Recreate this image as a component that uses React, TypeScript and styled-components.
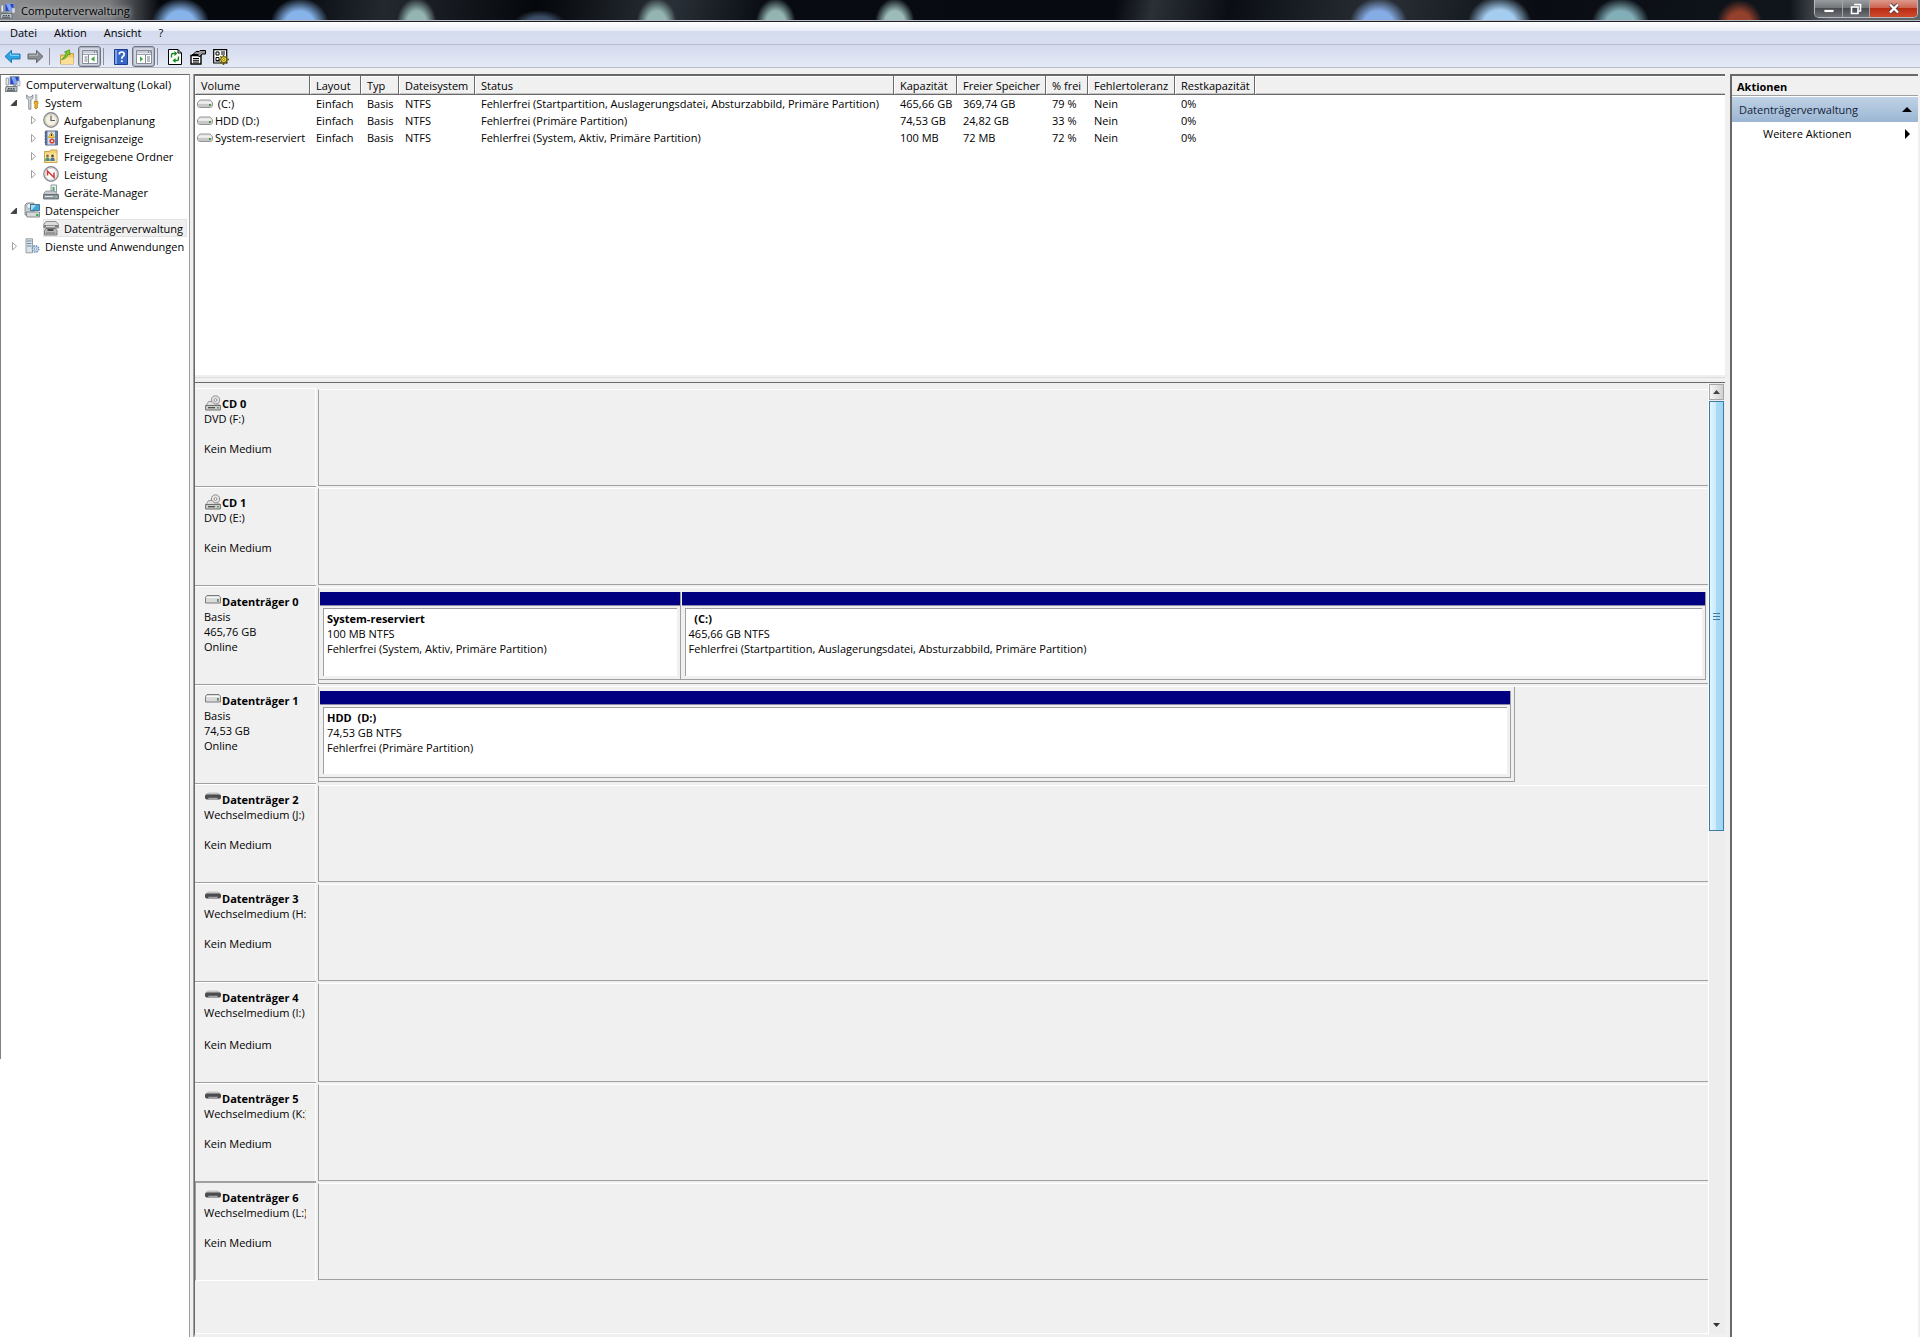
import React from 'react';
import styled, { createGlobalStyle, css } from 'styled-components';

const GlobalStyle = createGlobalStyle`
  * { box-sizing: border-box; }
  html, body { margin: 0; padding: 0; }
  body { background: #fff; overflow: hidden; }
  body, button, table { font-family: "Open Sans", "Noto Sans", sans-serif; font-size: 11px; line-height: 15px; color: #000; }
  button { margin: 0; padding: 0; border: 0; background: none; text-align: left; }
  svg { display: block; flex: none; }
  ul { list-style: none; margin: 0; padding: 0; }
  h1, h2, p { margin: 0; font-size: inherit; font-weight: inherit; }
`;

const c = { face: '#f0f0f0', gray: '#a0a0a0', dark: '#696969', navy: '#000080' };

/* ---------- window frame ---------- */

const Window = styled.div`
  height: 100vh;
  display: flex;
  flex-direction: column;
  background: ${c.face};
`;

const blob = (x: string, color: string, w = 22, h = 26) =>
  `radial-gradient(ellipse ${w}px ${h}px at ${x} 24px, ${color} 0%, ${color} 50%, transparent 100%)`;

const TitleBar = styled.header`
  flex: none;
  height: 22px;
  display: flex;
  align-items: flex-start;
  justify-content: space-between;
  border-bottom: 1px solid #1c2026;
  box-shadow: inset 0 -1px 0 #b9bec4;
  background:
    linear-gradient(90deg, #8d8f91 0, #77797b 110px, rgba(90, 94, 98, 0) 160px),
    linear-gradient(90deg, transparent calc(100% - 130px), #5f6468 calc(100% - 90px)),
    ${[
      blob('9.4%', '#86b3ea', 29),
      blob('15.6%', '#86b3ea', 29),
      blob('21.7%', '#93b4b0', 20),
      blob('28.1%', '#3d4e68', 26, 14),
      blob('34.2%', '#93b4b0', 20),
      blob('40.4%', '#93b4b0', 20),
      blob('46.6%', '#9bbcba', 20),
      blob('71.8%', '#86ace6', 29),
      blob('78.1%', '#a4cdf0', 32, 28),
      blob('84.4%', '#82aeb8', 29),
      blob('90.6%', '#93402c', 23, 24),
    ].join(',')},
    linear-gradient(100deg, #05090e 15%, #23282f 20%, #04070b 28%, #2a3037 35%, #080c12 40%, #070a10 58%, #2b3036 60%, #0a0e14 64%, #2a2f36 72%, #090d13 80%, #10151b 92%);
`;

const Caption = styled.h1`
  display: flex;
  align-items: center;
  gap: 5px;
  height: 21px;
  text-shadow: 0 0 5px #c9cbcd, 0 0 8px #c9cbcd;
`;

const CaptionButtons = styled.div`
  display: flex;
  height: 18px;
  margin-right: 2px;
  border: 1px solid #b5b9bd;
  border-top: 0;
  border-radius: 0 0 5px 5px;
  overflow: hidden;
`;

const CaptionButton = styled.button<{ $w: number; $close?: boolean }>`
  width: ${p => p.$w}px;
  display: flex;
  align-items: center;
  justify-content: center;
  border-right: ${p => (p.$close ? 0 : '1px solid #a2a6aa')};
  background: ${p =>
    p.$close
      ? 'linear-gradient(#dd9a8c 0, #cf6552 45%, #b92c14 50%, #cf4a2c 100%)'
      : 'linear-gradient(#9a9da0 0, #74777a 45%, #484b4f 50%, #6f7377 100%)'};
`;

const MenuBar = styled.nav`
  flex: none;
  height: 23px;
  display: flex;
  align-items: center;
  gap: 17px;
  padding: 0 0 1px 10px;
  border-bottom: 1px solid #b6bccc;
  background: linear-gradient(#fff 0, #e9edf7 9px, #d4dbee 9px, #d9dff0 100%);
`;

const MenuItem = styled.button``;

const ToolBar = styled.div`
  flex: none;
  height: 23px;
  display: flex;
  align-items: center;
  padding: 1px 0 0 1px;
  border-bottom: 1px solid #b6bccc;
  background: linear-gradient(#d4dbee, #e4e9f5);
`;

const ToolButton = styled.button<{ $on?: boolean }>`
  width: 23px;
  height: 21px;
  display: flex;
  align-items: center;
  justify-content: center;
  border-radius: 3px;
  ${p => p.$on && css`
    border: 1px solid #6f7480;
    background: #d3d7e2;
    box-shadow: inset 0 0 1px 1px #a9aebb;
  `}
`;

const ToolSeparator = styled.span`
  width: 8px;
  height: 17px;
  background: linear-gradient(#8b909c, #8b909c) 2px 0 / 1px 100% no-repeat;
`;

/* ---------- panes ---------- */

const Panes = styled.div`
  flex: 1;
  min-height: 0;
  display: grid;
  grid-template-columns: 190px minmax(0, 1fr) 190px;
  padding-top: 6px;
`;

const TreePane = styled.aside`
  overflow: hidden;
  border-top: 1px solid ${c.dark};
  border-right: 1px solid ${c.gray};
  background: linear-gradient(#828282, #828282) 0 0 / 1px 78% no-repeat #fff;
`;

const TreeRow = styled.li<{ $level: number }>`
  height: 18px;
  display: flex;
  align-items: center;
  padding-left: ${p => [5, 6, 25][p.$level]}px;
  white-space: nowrap;
`;

const Twisty = styled.span<{ $hidden?: boolean }>`
  width: 18px;
  padding-left: 4px;
  visibility: ${p => (p.$hidden ? 'hidden' : 'visible')};
`;

const TreeLabel = styled.button<{ $selected?: boolean }>`
  height: 18px;
  display: flex;
  align-items: center;
  gap: 5px;
  padding-right: 4px;
  ${p => p.$selected && css`
    background: #f0f0f0;
    box-shadow: inset 0 0 0 1px #e2e2e2;
  `}
`;

const MainPane = styled.main`
  min-width: 0;
  display: grid;
  grid-template-rows: 309px minmax(0, 1fr);
  margin: 0 5px 0 3px;
  border-left: 1px solid ${c.gray};
`;

const VolumePane = styled.section`
  display: flex;
  flex-direction: column;
  border-left: 1px solid ${c.dark};
  border-top: 2px solid ${c.dark};
  border-bottom: 1px solid ${c.dark};
  overflow: hidden;
`;

const VolumeArea = styled.div`
  flex: 1;
  background: #fff;
`;

const Splitter = styled.div`
  height: 7px;
  background: linear-gradient(transparent 2px, #dcdcdc 2px, #dcdcdc 3px, transparent 3px);
`;

const VolumeTable = styled.table`
  width: 100%;
  table-layout: fixed;
  border-collapse: separate;
  border-spacing: 0;
`;

const Th = styled.th<{ $filler?: boolean }>`
  height: 19px;
  padding: 1px 0 0 6px;
  overflow: hidden;
  font-weight: normal;
  text-align: left;
  white-space: nowrap;
  background: ${c.face};
  border-bottom: 1px solid ${c.dark};
  border-right: ${p => (p.$filler ? 0 : `1px solid ${c.dark}`)};
  box-shadow: inset 1px 1px 0 #fff, inset 0 -1px 0 #c4c4c4;
`;

const Td = styled.td`
  height: 17px;
  padding: 0 0 0 6px;
  white-space: nowrap;
  &:first-child { padding-left: 2px; }
`;

const VolumeName = styled.span`
  display: flex;
  align-items: center;
  gap: 2px;
  white-space: pre;
`;

/* ---------- graphical disk view ---------- */

const DiskPane = styled.section`
  display: flex;
  min-height: 0;
  border-left: 1px solid ${c.dark};
  border-bottom: 3px solid ${c.face};
  box-shadow: inset 0 -1px 0 #fff;
  overflow: hidden;
`;

const DiskList = styled.div`
  flex: 1;
  min-width: 0;
  padding-top: 5px;
  border-right: 1px solid #fff;
`;

const DiskRow = styled.article<{ $tall?: boolean }>`
  height: ${p => (p.$tall ? 101 : 99)}px;
  display: flex;
`;

const DiskInfo = styled.div<{ $selected?: boolean }>`
  width: 121px;
  flex: none;
  padding: 7px 0 0 9px;
  border-top: 1px solid #fff;
  border-bottom: 1px solid ${c.gray};
  box-shadow: inset -1px 0 0 #fff;
  ${p => p.$selected && css`
    padding-left: 8px;
    border-top: 1px solid ${c.gray};
    border-left: 1px solid ${c.gray};
    border-bottom: 1px solid #fff;
  `}
`;

const DiskTitle = styled.h2`
  height: 15px;
  display: flex;
  align-items: flex-end;
  gap: 1px;
  font-weight: bold;
  white-space: nowrap;
  svg { align-self: center; margin-left: 1px; }
`;

const DiskLine = styled.p<{ $gap?: boolean }>`
  width: 102px;
  min-height: ${p => (p.$gap ? 17 : 15)}px;
  overflow: hidden;
  white-space: nowrap;
`;

const DiskBody = styled.div<{ $bare?: boolean }>`
  flex: 1;
  min-width: 0;
  display: flex;
  margin: 1px 0 1px 2px;
  padding-right: 2px;
  border-top: 1px solid #fff;
  border-left: 1px solid ${c.gray};
  border-bottom: 1px solid ${p => (p.$bare ? 'transparent' : c.gray)};
`;

const DiskExtent = styled.div<{ $share: number; $framed?: boolean }>`
  flex: 0 0 ${p => p.$share}%;
  display: flex;
  padding: 4px ${p => (p.$framed ? 3 : 0)}px 3px 0;
  border-right: ${p => (p.$framed ? `1px solid ${c.gray}` : 0)};
  border-bottom: ${p => (p.$framed ? `1px solid ${c.gray}` : 0)};
`;

const PartitionBox = styled.div<{ $share: number }>`
  flex: ${p => p.$share} 1 0;
  min-width: 0;
  display: flex;
  flex-direction: column;
  padding-left: 1px;
  border-right: 1px solid ${c.gray};
  border-bottom: 1px solid ${c.gray};
`;

const PartitionBar = styled.div`
  flex: none;
  height: 14px;
  background: ${c.navy};
  border-bottom: 1px solid #8c8ca8;
`;

const PartitionInfo = styled.div`
  flex: 1;
  margin: 2px 3px 3px;
  padding: 2px 0 0 3px;
  border-top: 1px solid ${c.gray};
  border-left: 1px solid ${c.gray};
  background: #fff;
  white-space: pre;
  overflow: hidden;
`;

const Bold = styled.p`
  font-weight: bold;
`;

const ScrollBar = styled.div`
  width: 16px;
  flex: none;
  display: flex;
  flex-direction: column;
  padding: 1px 1px 1px 0;
  background: #ededed;
`;

const ScrollArrow = styled.button<{ $raised?: boolean }>`
  height: 17px;
  flex: none;
  display: flex;
  align-items: center;
  justify-content: center;
  ${p => p.$raised && css`
    height: 16px;
    border: 1px solid #a6a6a6;
    background: linear-gradient(90deg, #f7f7f7, #cfcfcf);
  `}
`;

const ScrollTrack = styled.div`
  flex: 1;
  padding-top: 1px;
`;

const ScrollThumb = styled.div`
  height: 47%;
  display: flex;
  align-items: center;
  justify-content: center;
  border: 1px solid #3d7ba3;
  background: linear-gradient(90deg, #e4f5fd 0, #c9ebfc 45%, #a6daf5 50%, #a3d6f2 100%);
`;

/* ---------- actions ---------- */

const ActionPane = styled.aside`
  display: flex;
  flex-direction: column;
  margin-right: 2px;
  border-left: 2px solid ${c.dark};
  border-top: 2px solid ${c.dark};
  background: #fff;
`;

const ActionHeader = styled.h2`
  height: 20px;
  padding: 3px 0 0 5px;
  background: ${c.face};
  border-bottom: 1px solid ${c.gray};
  font-weight: bold;
`;

const ActionGroup = styled.button`
  height: 25px;
  margin-top: 1px;
  display: flex;
  align-items: center;
  justify-content: space-between;
  padding: 0 6px 0 7px;
  color: #14233c;
  background: linear-gradient(#c0d2e6, #9bb6d3);
`;

const ActionItem = styled.button`
  height: 23px;
  display: flex;
  align-items: center;
  justify-content: space-between;
  padding: 0 8px 0 31px;
`;

/* ---------- icons ---------- */

const ComputerIcon = () => (
  <svg width="16" height="16" viewBox="0 0 16 16">
    <path d="M5 0.5h9v8H5z" fill="#2448c8" stroke="#8d98a8" />
    <path d="M6 1h4l3 7H9z" fill="#7fa4f2" />
    <path d="M8 9h3v2H8z" fill="#a0a6ae" />
    <path d="M1 2h2.500v7H1z" fill="#e4e8ee" stroke="#7f8894" strokeWidth=".7" />
    <path d="M12 5h3v5h-3z" fill="#d8dee6" stroke="#8d98a8" strokeWidth=".6" />
    <path d="M1 10.500h11v5H0z" fill="#b8c0c4" stroke="#5c666c" strokeWidth=".8" />
    <path d="M3 12.500h1.500m1 0H7m1 0h1.500M2 14.200h8" stroke="#38434a" />
  </svg>
);
const ToolsIcon = () => (
  <svg width="16" height="16" viewBox="-2 0 16 16">
    <path d="M.7 .8v3.600l2 1.300v9.500h2.200V5.700l2-1.300V.8L5.200 3H2.400z" fill="#d5d8dc" stroke="#777d84" strokeWidth=".8" />
    <path d="M9.300 .8h1.600v6.500H9.300z" fill="#dfe2e6" stroke="#888" strokeWidth=".6" />
    <path d="M8.300 7.500h3.600v2.500l-.6.600V14q-1.200 1.800-2.400 0v-3.400l-.6-.6z" fill="#f1b51c" stroke="#a86f08" strokeWidth=".7" />
  </svg>
);
const ClockIcon = () => (
  <svg width="16" height="16" viewBox="0 0 16 16">
    <circle cx="8" cy="8" r="7.200" fill="#f4f0e4" stroke="#8a8f95" strokeWidth="1.400" />
    <circle cx="8" cy="8" r="5.700" fill="none" stroke="#d9cfb4" />
    <path d="M8 3.500V8.500h4" fill="none" stroke="#5a5f68" strokeWidth="1.200" />
  </svg>
);
const EventIcon = () => (
  <svg width="16" height="16" viewBox="0 0 16 16">
    <path d="M2.500 1h12v14h-12z" fill="#5b7bb5" stroke="#5f6a80" />
    <path d="M4.500 1.500h7.500v13H4.500z" fill="#d3def1" />
    <path d="M8.500 2l3 5.500H5.500z" fill="#ffd42a" stroke="#b58b00" strokeWidth=".6" />
    <path d="M8.500 4v2" stroke="#222" />
    <circle cx="9" cy="11" r="2.600" fill="#d93a2b" />
    <path d="M7.900 9.900l2.200 2.200m0-2.200l-2.200 2.200" stroke="#fff" strokeWidth=".8" />
    <path d="M1.500 3h2M1.500 6h2M1.500 9h2M1.500 12h2" stroke="#555" />
  </svg>
);
const SharedFolderIcon = () => (
  <svg width="16" height="16" viewBox="0 0 16 16">
    <path d="M1.500 3.500h5l1-1.500h6.500v12.500H1.500z" fill="#f3d377" stroke="#c9a24a" />
    <path d="M2 5.500h11.500V14H2z" fill="#f9e6a0" />
    <circle cx="4.500" cy="8" r="1.400" fill="#8a6a48" /><path d="M2.200 13q0-3.400 2.300-3.400T6.800 13z" fill="#4d8f7a" />
    <circle cx="9.500" cy="8" r="1.400" fill="#5f4a36" /><path d="M7.200 13q0-3.400 2.300-3.400t2.300 3.400z" fill="#4d76a8" />
  </svg>
);
const PerfIcon = () => (
  <svg width="16" height="16" viewBox="0 0 16 16">
    <circle cx="8" cy="8" r="7.200" fill="#fff" stroke="#8a8f95" strokeWidth="1.400" />
    <circle cx="8" cy="8" r="5.700" fill="none" stroke="#d5d7da" />
    <path d="M4.500 9.500V5l6.500 6.500V6.500" fill="none" stroke="#d03a32" strokeWidth="1.500" />
  </svg>
);
const DeviceIcon = () => (
  <svg width="16" height="16" viewBox="0 0 16 16">
    <path d="M8 1h5.500v7H8z" fill="#e8f3ea" stroke="#90989e" />
    <path d="M9.500 3h2v4h-2z" fill="#52a86a" />
    <path d="M3 7h8l3 2v2H1V9z" fill="#c5cace" stroke="#7b8288" strokeWidth=".7" />
    <path d="M.5 10.500h15v4.500H.5z" fill="#8e979d" stroke="#5b636a" strokeWidth=".8" />
    <path d="M2 12.500h8" stroke="#dfe4e8" /><path d="M12 12h2v1.500h-2z" fill="#74d672" />
  </svg>
);
const StorageIcon = () => (
  <svg width="16" height="16" viewBox="0 0 16 16">
    <path d="M1 3l2-2h7v12H1z" fill="#c9ced2" stroke="#7a8187" strokeWidth=".8" />
    <circle cx="5" cy="4" r="2.500" fill="#eef2f4" stroke="#8d949a" strokeWidth=".7" />
    <path d="M6.500 2.500h9v6h-9z" fill="#3fa7dc" stroke="#31627e" strokeWidth=".8" />
    <path d="M7 3h5L8 8H7z" fill="#a4ddf5" />
    <path d="M2 10h13.500v5H3z" fill="#d6dadd" stroke="#6c7379" strokeWidth=".8" />
    <path d="M12 12h2.500v2H12z" fill="#3fae4a" />
  </svg>
);
const DiskMgmtIcon = () => (
  <svg width="16" height="16" viewBox="0 0 16 16">
    <path d="M3 1.500h10l2.500 3V8H.8V4.500z" fill="#dcdcdc" stroke="#777" strokeWidth=".8" />
    <path d="M1 5h14v2.500H1z" fill="#7d7d7d" /><path d="M3 8.500h9.500l1.500 2v4.500H1.500V10.500z" fill="#b9b9b9" stroke="#666" strokeWidth=".8" />
    <path d="M3 6.300h9" stroke="#eee" /><path d="M4.500 10h6" stroke="#222" strokeWidth="1.400" /><path d="M3 13h9" stroke="#777" />
  </svg>
);
const ServicesIcon = () => (
  <svg width="16" height="16" viewBox="0 0 16 16">
    <path d="M2 .8h6.500v14H2z" fill="#dbe3e8" stroke="#7e8a93" strokeWidth=".8" />
    <path d="M3 3h4.500M3 5.500h4.500M3 8h4.500" stroke="#6f8796" />
    <circle cx="11.500" cy="11" r="3.200" fill="#cfe0ef" stroke="#6f92b5" strokeWidth="1.600" strokeDasharray="1.500 1" />
    <circle cx="11.500" cy="11" r="1.200" fill="#fff" stroke="#6f92b5" strokeWidth=".7" />
  </svg>
);
const VolumeIcon = () => (
  <svg width="16" height="10" viewBox="0 0 16 10">
    <path d="M3 1h10q1.500 1 2.500 3v2.500q-.5 2-2 2h-11q-1.500 0-2-2V4Q1.500 2 3 1z" fill="#e6e6e6" stroke="#8a8a8a" strokeWidth=".9" />
    <path d="M1 4.500h14v2q-.3 1.500-1.500 1.500h-11Q1.300 8 1 6.500z" fill="#c6c7c7" /><path d="M1.500 4h13" stroke="#fafafa" />
    <path d="M12 5h1.800v2H12z" fill="#3f8f4a" />
  </svg>
);
const DiskIcon = () => (
  <svg width="16" height="15" viewBox="0 0 16 15">
    <path d="M2 1.500h12l1.500 2v5.500H.5V3.500z" fill="#d9dad9" stroke="#7b7b7b" />
    <path d="M1.500 3.500h13" stroke="#fafafa" /><path d="M12 5h1.800v2.800H12z" fill="#58935f" />
  </svg>
);
const RemovableIcon = () => (
  <svg width="16" height="15" viewBox="0 0 16 15">
    <path d="M3.500 .5h9Q15 1 16 3.500H0Q1 1 3.500 .5z" fill="#c4c4c4" />
    <path d="M0 3.500Q.5 2.500 2 2.500h12q1.500 0 2 1V6q-.5 1.500-2 1.500H2Q.5 7.500 0 6z" fill="#4c4c50" /><path d="M3 5.800h10l-1 1.700H4z" fill="#a5a5a5" />
  </svg>
);
const CdIcon = () => (
  <svg width="16" height="17" viewBox="0 0 16 17">
    <circle cx="10.500" cy="5" r="4.200" fill="#e4e4e4" stroke="#8f8f8f" />
    <circle cx="10.500" cy="5" r="1.400" fill="#fff" stroke="#7a7a7a" strokeWidth=".8" />
    <path d="M3.500 6.500h4l2 2.500h4l2 2H.8z" fill="#dedede" stroke="#858585" strokeWidth=".8" />
    <path d="M.6 10.500h14.800v4.500H.6z" fill="#cdd0cd" stroke="#6f6f6f" /><path d="M3 12.700h7" stroke="#444" strokeWidth="1.200" />
    <path d="M12 12h1.800v1.500H12z" fill="#4f9d52" />
  </svg>
);
const ArrowIcon = ({ forward }: { forward?: boolean }) => (
  <svg width="17" height="15" viewBox="0 0 17 15">
    <path
      d={forward ? 'M16 7.500L9.500 1.300V5H1v5h8.500v3.700z' : 'M1 7.500l6.500-6.200V5H16v5H7.500v3.700z'}
      fill={forward ? '#8b8f93' : '#2ba3e0'} stroke={forward ? '#63676b' : '#2473b5'}
    />
    <path d={forward ? 'M2 6.300h8.500V4' : 'M15 6.300H6.500V4'} fill="none" stroke={forward ? '#b9bcbf' : '#8fdcfa'} />
  </svg>
);
const FolderUpIcon = () => (
  <svg width="16" height="16" viewBox="0 0 16 16">
    <path d="M1.500 6h5l1-1.500h7V15h-13z" fill="#f0cb66" stroke="#b98f37" strokeWidth=".8" />
    <path d="M2 8.500h12.500V15H2z" fill="#f9e096" />
    <path d="M2.500 10.500Q8 10 9 5l2 .8L10.500 .8 5.500 3l1.800.8Q6 8 2.500 10.500z" fill="#7bc92f" stroke="#4a8d16" strokeWidth=".7" />
  </svg>
);
const PaneIcon = ({ right }: { right?: boolean }) => (
  <svg width="16" height="16" viewBox="0 0 16 16">
    <path d="M.5 1.500h15v13H.5z" fill="#fff" stroke="#858b98" />
    <path d="M1 2h14v2.500H1z" fill="#c9cdd8" /><path d="M12 3h1m1 0h.8" stroke="#555" />
    <path d="M1 5.500h14" stroke="#9aa0ac" /><path d={right ? 'M9.500 6v8' : 'M6.500 6v8'} stroke="#858b98" />
    <path d={right ? 'M11 8h3m-3 2h3m-3 2h3' : 'M2.500 8h3m-3 2h3m-3 2h3'} stroke="#757b86" />
    <path d={right ? 'M4 7.200v5.600L7 10z' : 'M12.500 7.200v5.600L9 10z'} fill="#3ba637" />
  </svg>
);
const HelpIcon = () => (
  <svg width="14" height="16" viewBox="0 0 14 16">
    <path d="M.5.500h13v15H.5z" fill="#3566c8" stroke="#1f3d8a" /><path d="M1 1h2v14H1z" fill="#7ea3e6" />
    <path d="M5.200 5.500q0-2.500 2.500-2.500t2.500 2.300q0 1.400-1.400 2.200Q7.800 8.200 7.800 9.700" fill="none" stroke="#fff" strokeWidth="1.700" />
    <path d="M6.900 11.300h1.800V13H6.900z" fill="#fff" />
  </svg>
);
const RefreshIcon = () => (
  <svg width="14" height="16" viewBox="0 0 14 16">
    <path d="M.5.500h9.500l3.500 3.500v11.500H.5z" fill="#fff" stroke="#000" /><path d="M10 .5V4h3.500" fill="none" stroke="#000" />
    <path d="M3.500 8.500V6q0-1.500 1.500-1.500h2M10.500 7.500V10q0 1.500-1.500 1.500H7" fill="none" stroke="#158a1d" strokeWidth="1.400" />
    <path d="M6.500 2l3 2.500-3 2.500zM7.500 9v5L4.500 11.500z" fill="#158a1d" />
  </svg>
);
const PropertiesIcon = () => (
  <svg width="16" height="16" viewBox="0 0 16 16">
    <path d="M1 6.500h10V15H1z" fill="#fff" stroke="#000" strokeWidth="1.400" />
    <path d="M3 9.500h6M3 11.300h6M3 13.100h6" stroke="#000" />
    <path d="M2.500 6L6 2.500h3L10 1.500h5.500V5H12L9.500 8 8 6.500z" fill="#9a9a9a" stroke="#000" />
    <path d="M2 6h6.500" stroke="#000" strokeWidth="2" />
  </svg>
);
const SettingsIcon = () => (
  <svg width="16" height="16" viewBox="0 0 16 16">
    <path d="M.7.700h13V14H.7z" fill="#fff" stroke="#000" strokeWidth="1.200" />
    <path d="M3 3h3v3H3zM3 8.500h3v3H3z" fill="none" stroke="#000" /><path d="M8 3h4M8 5h4M7 12H2.500" stroke="#000" />
    <path d="M10.500 6v2M10.500 14v2M6 10.500h2M13.500 10.500H16M7.300 7.300l1.500 1.500M12.300 12.300l2 2M14 7.300l-1.700 1.500M7.300 14l1.500-1.500" stroke="#5d5200" strokeWidth="1.500" />
    <circle cx="10.800" cy="10.600" r="3" fill="#f3e02c" stroke="#5d5200" /><circle cx="10.800" cy="10.600" r="1" fill="#fff" stroke="#5d5200" strokeWidth=".7" />
  </svg>
);
const TwistyIcon = ({ open }: { open?: boolean }) => (
  <svg width="8" height="10" viewBox="0 0 8 10">
    {open ? <path d="M6.500 3v5.500H1z" fill="#404040" stroke="#202020" strokeWidth=".7" />
      : <path d="M2.500 1.500v7.500L6.500 5.250z" fill="#fff" stroke="#a0a0a0" />}
  </svg>
);
const Triangle = ({ d, w, h, fill = '#000' }: { d: string; w: number; h: number; fill?: string }) => (
  <svg width={w} height={h} viewBox={`0 0 ${w} ${h}`}><path d={d} fill={fill} /></svg>
);

/* ---------- data ---------- */

type Icon = () => React.JSX.Element;
type Node = { label: string; level: number; icon: Icon; state?: 'open' | 'closed'; selected?: boolean };
const tree: Node[] = [
  { label: 'Computerverwaltung (Lokal)', level: 0, icon: ComputerIcon },
  { label: 'System', level: 1, icon: ToolsIcon, state: 'open' },
  { label: 'Aufgabenplanung', level: 2, icon: ClockIcon, state: 'closed' },
  { label: 'Ereignisanzeige', level: 2, icon: EventIcon, state: 'closed' },
  { label: 'Freigegebene Ordner', level: 2, icon: SharedFolderIcon, state: 'closed' },
  { label: 'Leistung', level: 2, icon: PerfIcon, state: 'closed' },
  { label: 'Geräte-Manager', level: 2, icon: DeviceIcon },
  { label: 'Datenspeicher', level: 1, icon: StorageIcon, state: 'open' },
  { label: 'Datenträgerverwaltung', level: 2, icon: DiskMgmtIcon, selected: true },
  { label: 'Dienste und Anwendungen', level: 1, icon: ServicesIcon, state: 'closed' },
];

const columns: [string, number][] = [
  ['Volume', 115], ['Layout', 51], ['Typ', 38], ['Dateisystem', 76], ['Status', 419],
  ['Kapazität', 63], ['Freier Speicher', 89], ['% frei', 42], ['Fehlertoleranz', 87], ['Restkapazität', 80],
];

const volumes = [
  [' (C:)', 'Einfach', 'Basis', 'NTFS', 'Fehlerfrei (Startpartition, Auslagerungsdatei, Absturzabbild, Primäre Partition)', '465,66 GB', '369,74 GB', '79 %', 'Nein', '0%'],
  ['HDD (D:)', 'Einfach', 'Basis', 'NTFS', 'Fehlerfrei (Primäre Partition)', '74,53 GB', '24,82 GB', '33 %', 'Nein', '0%'],
  ['System-reserviert', 'Einfach', 'Basis', 'NTFS', 'Fehlerfrei (System, Aktiv, Primäre Partition)', '100 MB', '72 MB', '72 %', 'Nein', '0%'],
];

type Partition = { name: string; size: string; status: string; share: number };
type Disk = { name: string; lines: string[]; icon: Icon; share?: number; parts?: Partition[]; tall?: boolean; selected?: boolean };
const removable = (n: number, label: string, extra: Partial<Disk> = {}): Disk => ({
  name: `Datenträger ${n}`, lines: [`Wechselmedium ${label}`, '', 'Kein Medium'], icon: RemovableIcon, ...extra,
});
const disks: Disk[] = [
  { name: 'CD 0', lines: ['DVD (F:)', '', 'Kein Medium'], icon: CdIcon },
  { name: 'CD 1', lines: ['DVD (E:)', '', 'Kein Medium'], icon: CdIcon },
  {
    name: 'Datenträger 0', lines: ['Basis', '465,76 GB', 'Online'], icon: DiskIcon, share: 100,
    parts: [
      { name: 'System-reserviert', size: '100 MB NTFS', status: 'Fehlerfrei (System, Aktiv, Primäre Partition)', share: 26 },
      { name: '  (C:)', size: '465,66 GB NTFS', status: 'Fehlerfrei (Startpartition, Auslagerungsdatei, Absturzabbild, Primäre Partition)', share: 74 },
    ],
  },
  {
    name: 'Datenträger 1', lines: ['Basis', '74,53 GB', 'Online'], icon: DiskIcon, share: 86.2,
    parts: [{ name: 'HDD  (D:)', size: '74,53 GB NTFS', status: 'Fehlerfrei (Primäre Partition)', share: 1 }],
  },
  removable(2, '(J:)'),
  removable(3, '(H:)'),
  removable(4, '(I:)', { tall: true }),
  removable(5, '(K:)'),
  removable(6, '(L:)', { selected: true }),
];

export default function App() {
  return (
    <Window>
      <GlobalStyle />
      <TitleBar>
        <Caption><ComputerIcon />Computerverwaltung</Caption>
        <CaptionButtons>
          <CaptionButton $w={28} aria-label="Minimieren">
            <svg width="12" height="12" viewBox="0 0 12 12"><path d="M1 6.500h10v3H1z" fill="#fff" stroke="#444" strokeWidth=".7" /></svg>
          </CaptionButton>
          <CaptionButton $w={27} aria-label="Verkleinern">
            <svg width="12" height="12" viewBox="0 0 12 12"><path d="M4 1.500h6.500V8H8.500M1.500 4H8v6.500H1.500z" fill="none" stroke="#fff" strokeWidth="1.600" /></svg>
          </CaptionButton>
          <CaptionButton $w={47} $close aria-label="Schließen">
            <svg width="12" height="12" viewBox="0 0 12 12"><path d="M2 1.500l8 8M10 1.500l-8 8" stroke="#574040" strokeWidth="4" /><path d="M2 1.500l8 8M10 1.500l-8 8" stroke="#fff" strokeWidth="2.400" /></svg>
          </CaptionButton>
        </CaptionButtons>
      </TitleBar>

      <MenuBar>
        {['Datei', 'Aktion', 'Ansicht', '?'].map(m => <MenuItem key={m}>{m}</MenuItem>)}
      </MenuBar>

      <ToolBar role="toolbar">
        <ToolButton aria-label="Zurück"><ArrowIcon /></ToolButton>
        <ToolButton aria-label="Vorwärts"><ArrowIcon forward /></ToolButton>
        <ToolSeparator />
        <ToolButton aria-label="Eine Ebene nach oben"><FolderUpIcon /></ToolButton>
        <ToolButton $on aria-label="Konsolenstruktur"><PaneIcon /></ToolButton>
        <ToolSeparator />
        <ToolButton aria-label="Hilfe"><HelpIcon /></ToolButton>
        <ToolButton $on aria-label="Aktionsbereich"><PaneIcon right /></ToolButton>
        <ToolSeparator />
        <ToolButton aria-label="Aktualisieren"><RefreshIcon /></ToolButton>
        <ToolButton aria-label="Eigenschaften"><PropertiesIcon /></ToolButton>
        <ToolButton aria-label="Einstellungen"><SettingsIcon /></ToolButton>
      </ToolBar>

      <Panes>
        <TreePane>
          <ul>
            {tree.map(({ label, level, icon: NodeIcon, state, selected }) => (
              <TreeRow key={label} $level={level}>
                {level > 0 && <Twisty $hidden={!state}><TwistyIcon open={state === 'open'} /></Twisty>}
                <TreeLabel $selected={selected}><NodeIcon />{label}</TreeLabel>
              </TreeRow>
            ))}
          </ul>
        </TreePane>

        <MainPane>
          <VolumePane>
            <VolumeArea>
              <VolumeTable>
                <colgroup>
                  {columns.map(([name, width]) => <col key={name} width={width} />)}
                  <col />
                </colgroup>
                <thead>
                  <tr>
                    {columns.map(([name]) => <Th key={name}>{name}</Th>)}
                    <Th $filler />
                  </tr>
                </thead>
                <tbody>
                  {volumes.map(([name, ...cells]) => (
                    <tr key={name}>
                      <Td><VolumeName><VolumeIcon />{name}</VolumeName></Td>
                      {cells.map((cell, i) => <Td key={i}>{cell}</Td>)}
                      <Td />
                    </tr>
                  ))}
                </tbody>
              </VolumeTable>
            </VolumeArea>
            <Splitter />
          </VolumePane>

          <DiskPane>
            <DiskList>
              {disks.map(({ name, lines, icon: DIcon, share, parts, tall, selected }) => (
                <DiskRow key={name} $tall={tall}>
                  <DiskInfo $selected={selected}>
                    <DiskTitle><DIcon />{name}</DiskTitle>
                    {lines.map((line, i) => <DiskLine key={i} $gap={tall && !line}>{line}</DiskLine>)}
                  </DiskInfo>
                  <DiskBody $bare={share !== undefined && share < 100}>
                    {parts && (
                      <DiskExtent $share={share!} $framed={share! < 100}>
                        {parts.map(p => (
                          <PartitionBox key={p.name} $share={p.share}>
                            <PartitionBar />
                            <PartitionInfo>
                              <Bold>{p.name}</Bold>
                              <p>{p.size}</p>
                              <p>{p.status}</p>
                            </PartitionInfo>
                          </PartitionBox>
                        ))}
                      </DiskExtent>
                    )}
                  </DiskBody>
                </DiskRow>
              ))}
            </DiskList>
            <ScrollBar>
              <ScrollArrow $raised aria-label="Nach oben"><Triangle w={7} h={4} d="M0 4h7L3.500 0z" fill="#444" /></ScrollArrow>
              <ScrollTrack>
                <ScrollThumb>
                  <svg width="7" height="9" viewBox="0 0 7 9"><path d="M0 1.500h7M0 4.500h7M0 7.500h7" stroke="#3d7ba3" /></svg>
                </ScrollThumb>
              </ScrollTrack>
              <ScrollArrow aria-label="Nach unten"><Triangle w={7} h={4} d="M0 0h7L3.500 4z" fill="#333" /></ScrollArrow>
            </ScrollBar>
          </DiskPane>
        </MainPane>

        <ActionPane>
          <ActionHeader>Aktionen</ActionHeader>
          <ActionGroup>Datenträgerverwaltung<Triangle w={10} h={5} d="M0 5h10L5 0z" /></ActionGroup>
          <ActionItem>Weitere Aktionen<Triangle w={5} h={10} d="M0 0v10l5-5z" /></ActionItem>
        </ActionPane>
      </Panes>
    </Window>
  );
}
